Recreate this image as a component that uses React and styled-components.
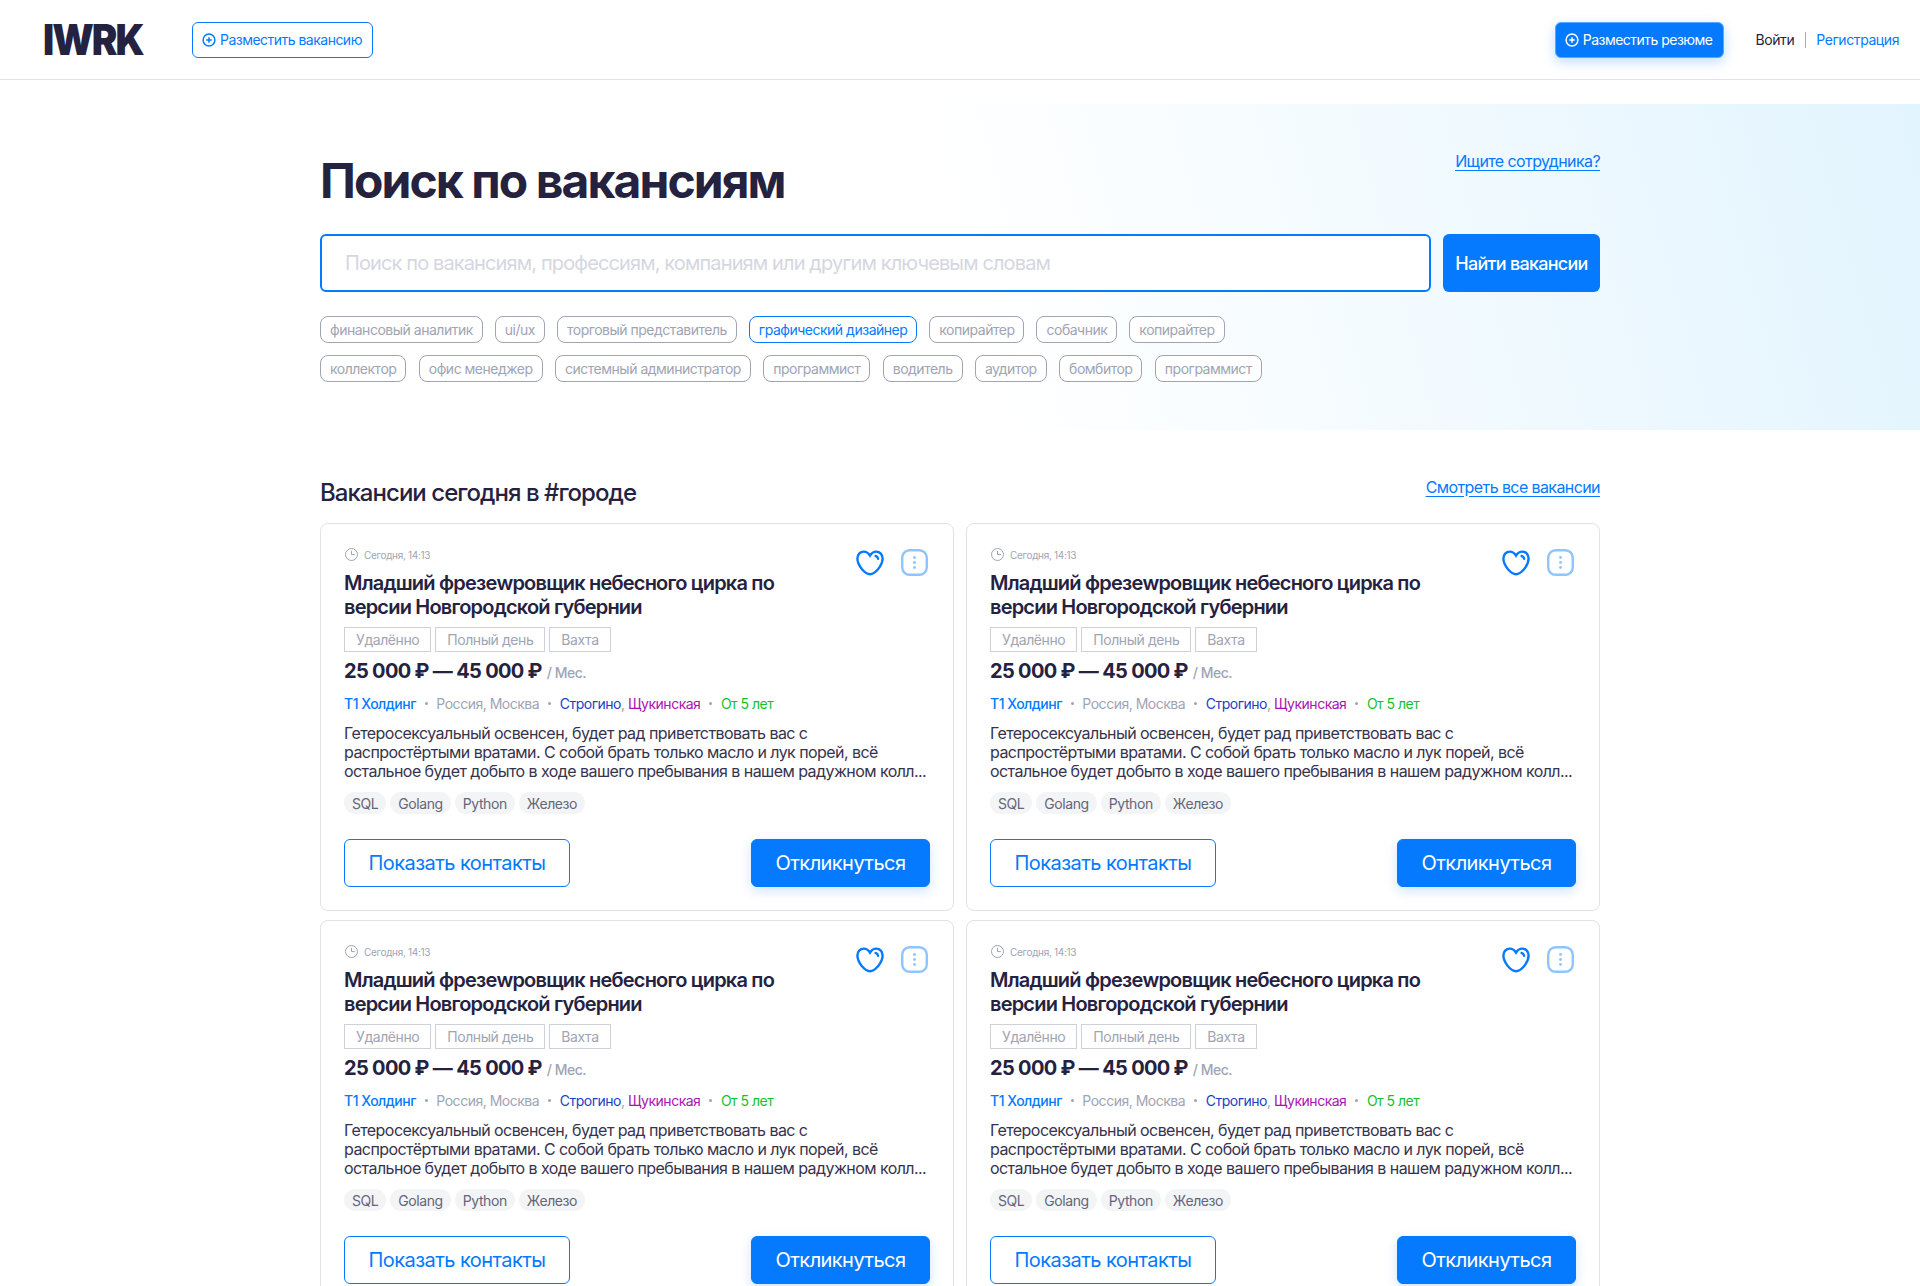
import styled, { createGlobalStyle } from 'styled-components'

const blue = '#057aff'
const ink = '#25223f'
const muted = '#a0a4b4'

const GlobalStyle = createGlobalStyle`
  * { box-sizing: border-box; }
  html, body { margin: 0; padding: 0; background: #fff; }
  body { font-family: Inter, "Noto Sans", sans-serif; color: ${ink}; }
  #root { height: 1286px; overflow: hidden; }
`

const Header = styled.header`
  height: 80px;
  display: flex;
  align-items: center;
  padding: 0 21px 0 43px;
  border-bottom: 1px solid #e1e1e8;
`

const Logo = styled.div`
  width: 101px;
  font-size: 42px;
  line-height: 1;
  font-weight: 900;
  letter-spacing: -2.2px;
  color: ${ink};
  margin-right: 48px;
  transform: scaleX(0.915);
  transform-origin: left center;
`

const HeaderButton = styled.a`
  height: 36px;
  display: inline-flex;
  align-items: center;
  gap: 4px;
  padding: 0 10px 0 9px;
  font-size: 14px;
  letter-spacing: -0.037em;
  border-radius: 6px;
  color: ${p => (p.$primary ? '#fff' : blue)};
  background: ${p => (p.$primary ? blue : '#fff')};
  border: 1px solid ${p => (p.$primary ? '#5aa8ff' : blue)};
  box-shadow: ${p => (p.$primary ? '0 4px 12px rgba(5, 122, 255, 0.25)' : 'none')};
`

const HeaderRight = styled.div`
  margin-left: auto;
  display: flex;
  align-items: center;
`

const AuthLinks = styled.div`
  margin-left: 32px;
  display: flex;
  align-items: center;
  font-size: 14px;
  letter-spacing: -0.03em;
`

const SignIn = styled.span`
  color: ${ink};
  padding-right: 11px;
  border-right: 1px solid #a9abb8;
  line-height: 16px;
`

const SignUp = styled.span`
  color: ${blue};
  padding-left: 10px;
  line-height: 16px;
`

const Hero = styled.section`
  margin-top: 24px;
  height: 326px;
  background: linear-gradient(75deg, #fff 50%, #e2f4fe 100%);
`

const Container = styled.div`
  width: 1280px;
  margin: 0 auto;
`

const HeroTop = styled.div`
  display: flex;
  justify-content: space-between;
  align-items: flex-start;
  padding-top: 48px;
  height: 130px;
`

const Title = styled.h1`
  margin: 0;
  font-size: 48px;
  line-height: 58px;
  font-weight: 700;
  letter-spacing: -0.04em;
  color: ${ink};
`

const TextLink = styled.a`
  font-size: 16px;
  line-height: 19px;
  letter-spacing: -0.037em;
  color: ${blue};
  text-decoration: underline;
  text-underline-offset: 3px;
`

const AllLink = styled(TextLink)`
  margin-bottom: 10px;
`

const SearchRow = styled.div`
  display: flex;
  gap: 12px;
`

const SearchInput = styled.input`
  flex: 1;
  height: 58px;
  padding: 0 23px;
  font: 400 20px Inter, sans-serif;
  letter-spacing: -0.044em;
  color: ${ink};
  background: #fff;
  border: 2px solid ${blue};
  border-radius: 6px;
  outline: none;

  &::placeholder {
    color: #d5d7e0;
    opacity: 1;
  }
`

const SearchButton = styled.button`
  width: 157px;
  height: 58px;
  padding: 0;
  font: 500 18px Inter, sans-serif;
  letter-spacing: -0.04em;
  color: #fff;
  background: ${blue};
  border: 0;
  border-radius: 6px;
`

const TagRows = styled.div`
  display: flex;
  flex-direction: column;
  gap: 12px;
  margin-top: 24px;
`

const TagRow = styled.div`
  display: flex;
  gap: ${p => p.$gap}px;
`

const Tag = styled.span`
  height: 27px;
  display: inline-flex;
  align-items: center;
  padding: 0 9px;
  font-size: 14px;
  letter-spacing: -0.035em;
  border-radius: 8px;
  color: ${p => (p.$active ? blue : muted)};
  border: 1px solid ${p => (p.$active ? blue : muted)};
  background: #fff;
`

const SectionHead = styled.div`
  display: flex;
  justify-content: space-between;
  align-items: center;
  height: 32px;
  margin: 46px 0 15px;
`

const SectionTitle = styled.h2`
  margin: 0;
  padding-top: 2px;
  font-size: 24px;
  line-height: 32px;
  font-weight: 500;
  letter-spacing: -0.04em;
  color: ${ink};
`

const Grid = styled.div`
  display: grid;
  grid-template-columns: repeat(2, 1fr);
  gap: 9px 12px;
`

const Card = styled.article`
  position: relative;
  height: 388px;
  padding: 23px 23px 0;
  border: 1px solid #e1e1e8;
  border-radius: 8px;
`

const CardActions = styled.div`
  position: absolute;
  top: 25px;
  right: 25px;
  display: flex;
  align-items: center;
  gap: 17px;
`

const Posted = styled.div`
  display: flex;
  align-items: center;
  gap: 5px;
  height: 15px;
  font-size: 10px;
  letter-spacing: -0.03em;
  color: ${muted};
`

const JobTitle = styled.h3`
  margin: 9px 0 0;
  width: 460px;
  font-size: 20px;
  line-height: 24px;
  font-weight: 600;
  letter-spacing: -0.04em;
  color: ${ink};
`

const Chips = styled.div`
  display: flex;
  gap: 4px;
  margin-top: 8px;
`

const Chip = styled.span`
  height: 25px;
  display: inline-flex;
  align-items: center;
  padding: 0 11px;
  font-size: 14px;
  letter-spacing: -0.03em;
  color: ${muted};
  border: 1px solid #cfd1da;
`

const PriceRow = styled.div`
  display: flex;
  align-items: baseline;
  gap: 5px;
  margin-top: 5px;
  line-height: 28px;
`

const Price = styled.span`
  font-size: 20px;
  font-weight: 700;
  letter-spacing: -0.034em;
  color: ${ink};
`

const PriceUnit = styled.span`
  font-size: 14px;
  font-weight: 500;
  letter-spacing: -0.035em;
  color: ${muted};
`

const Meta = styled.div`
  display: flex;
  align-items: center;
  margin-top: 8px;
  font-size: 14px;
  line-height: 17px;
  letter-spacing: -0.035em;
  color: ${muted};
`

const Company = styled.span`
  color: ${blue};
  font-weight: 500;
`

const Dot = styled.i`
  width: 3px;
  height: 3px;
  margin: 0 8.5px 0 9px;
  border-radius: 50%;
  background: ${muted};
`

const Metro = styled.span`
  color: ${p => p.$color};
`

const Experience = styled.span`
  color: #14c22e;
`

const Description = styled.p`
  margin: 12px 0 0;
  font-size: 16px;
  line-height: 19px;
  letter-spacing: -0.035em;
  color: #36334d;
`

const Skills = styled.div`
  display: flex;
  gap: 4px;
  margin-top: 11px;
`

const Skill = styled.span`
  height: 22px;
  display: inline-flex;
  align-items: center;
  padding: 0 8px;
  font-size: 14px;
  letter-spacing: -0.03em;
  color: #64667a;
  background: #f3f4f6;
  border-radius: 11px;
`

const CardButtons = styled.div`
  display: flex;
  justify-content: space-between;
  margin-top: 25px;
`

const ActionButton = styled.button`
  width: ${p => (p.$primary ? '179px' : '226px')};
  height: 48px;
  padding: 0;
  font: 400 20px Inter, sans-serif;
  letter-spacing: -0.028em;
  color: ${p => (p.$primary ? '#fff' : blue)};
  background: ${p => (p.$primary ? blue : '#fff')};
  border: 1px solid ${blue};
  border-radius: 6px;
  box-shadow: ${p => (p.$primary ? '0 4px 12px rgba(5, 122, 255, 0.2)' : 'none')};
`

const PlusIcon = () => (
  <svg width="14" height="14" viewBox="0 0 14 14" fill="none" stroke="currentColor" strokeWidth="1.5">
    <circle cx="7" cy="7" r="5.9" />
    <path d="M7 4.2v5.6M4.2 7h5.6" />
  </svg>
)

const ClockIcon = () => (
  <svg width="15" height="15" viewBox="0 0 15 15" fill="none" stroke="#a0a4b4" strokeWidth="1">
    <circle cx="7.5" cy="7.5" r="6" />
    <path d="M7.5 3.8v3.8h3.4" />
  </svg>
)

const HeartIcon = () => (
  <svg width="28" height="26" viewBox="0 0 28 26" fill="none" stroke="#057aff" strokeWidth="2.4" strokeLinecap="round">
    <path d="M14 5.6C12.4 2.9 10.2 1.6 7.8 1.6 4 1.6 1.4 4.6 1.4 8.6c0 7.4 8 15.6 12.6 15.6s12.6-8.2 12.6-15.6c0-4-2.6-7-6.4-7-2.4 0-4.6 1.3-6.2 4Z" />
    <path d="M19.6 6c1.4.3 2.2 1.2 2.5 2.7" />
  </svg>
)

const MoreIcon = () => (
  <svg width="27" height="27" viewBox="0 0 27 27" fill="none">
    <rect x="1.2" y="1.2" width="24.6" height="24.6" rx="7.5" stroke="#90c4ff" strokeWidth="2.4" />
    <circle cx="13.5" cy="8.5" r="1.4" fill="#90c4ff" />
    <circle cx="13.5" cy="13.5" r="1.4" fill="#90c4ff" />
    <circle cx="13.5" cy="18.5" r="1.4" fill="#90c4ff" />
  </svg>
)

const tagRows = [
  {
    gap: 12,
    tags: [
      { label: 'финансовый аналитик' },
      { label: 'ui/ux' },
      { label: 'торговый представитель' },
      { label: 'графический дизайнер', active: true },
      { label: 'копирайтер' },
      { label: 'собачник' },
      { label: 'копирайтер' },
    ],
  },
  {
    gap: 12.4,
    tags: [
      { label: 'коллектор' },
      { label: 'офис менеджер' },
      { label: 'системный администратор' },
      { label: 'программист' },
      { label: 'водитель' },
      { label: 'аудитор' },
      { label: 'бомбитор' },
      { label: 'программист' },
    ],
  },
]

const JobCard = () => (
  <Card>
    <CardActions>
      <HeartIcon />
      <MoreIcon />
    </CardActions>
    <Posted>
      <ClockIcon />
      Сегодня, 14:13
    </Posted>
    <JobTitle>Младший фрезеwровщик небесного цирка по версии Новгородской губернии</JobTitle>
    <Chips>
      <Chip>Удалённо</Chip>
      <Chip>Полный день</Chip>
      <Chip>Вахта</Chip>
    </Chips>
    <PriceRow>
      <Price>25 000 ₽ — 45 000 ₽</Price>
      <PriceUnit>/ Мес.</PriceUnit>
    </PriceRow>
    <Meta>
      <Company>Т1 Холдинг</Company>
      <Dot />
      Россия, Москва
      <Dot />
      <span>
        <Metro $color="#1a3fc4">Строгино</Metro>, <Metro $color="#a814b0">Щукинская</Metro>
      </span>
      <Dot />
      <Experience>От 5 лет</Experience>
    </Meta>
    <Description>
      Гетеросексуальный освенсен, будет рад приветствовать вас с
      <br />
      распростёртыми вратами. С собой брать только масло и лук порей, всё
      <br />
      остальное будет добыто в ходе вашего пребывания в нашем радужном колл...
    </Description>
    <Skills>
      <Skill>SQL</Skill>
      <Skill>Golang</Skill>
      <Skill>Python</Skill>
      <Skill>Железо</Skill>
    </Skills>
    <CardButtons>
      <ActionButton>Показать контакты</ActionButton>
      <ActionButton $primary>Откликнуться</ActionButton>
    </CardButtons>
  </Card>
)

export default function App() {
  return (
    <>
      <GlobalStyle />
      <Header>
        <Logo>IWRK</Logo>
        <HeaderButton>
          <PlusIcon />
          Разместить вакансию
        </HeaderButton>
        <HeaderRight>
          <HeaderButton $primary>
            <PlusIcon />
            Разместить резюме
          </HeaderButton>
          <AuthLinks>
            <SignIn>Войти</SignIn>
            <SignUp>Регистрация</SignUp>
          </AuthLinks>
        </HeaderRight>
      </Header>
      <Hero>
        <Container>
          <HeroTop>
            <Title>Поиск по вакансиям</Title>
            <TextLink>Ищите сотрудника?</TextLink>
          </HeroTop>
          <SearchRow>
            <SearchInput placeholder="Поиск по вакансиям, профессиям, компаниям или другим ключевым словам" />
            <SearchButton>Найти вакансии</SearchButton>
          </SearchRow>
          <TagRows>
            {tagRows.map((row, i) => (
              <TagRow key={i} $gap={row.gap}>
                {row.tags.map((tag, j) => (
                  <Tag key={j} $active={tag.active}>{tag.label}</Tag>
                ))}
              </TagRow>
            ))}
          </TagRows>
        </Container>
      </Hero>
      <Container>
        <SectionHead>
          <SectionTitle>Вакансии сегодня в #городе</SectionTitle>
          <AllLink>Смотреть все вакансии</AllLink>
        </SectionHead>
        <Grid>
          <JobCard />
          <JobCard />
          <JobCard />
          <JobCard />
        </Grid>
      </Container>
    </>
  )
}
